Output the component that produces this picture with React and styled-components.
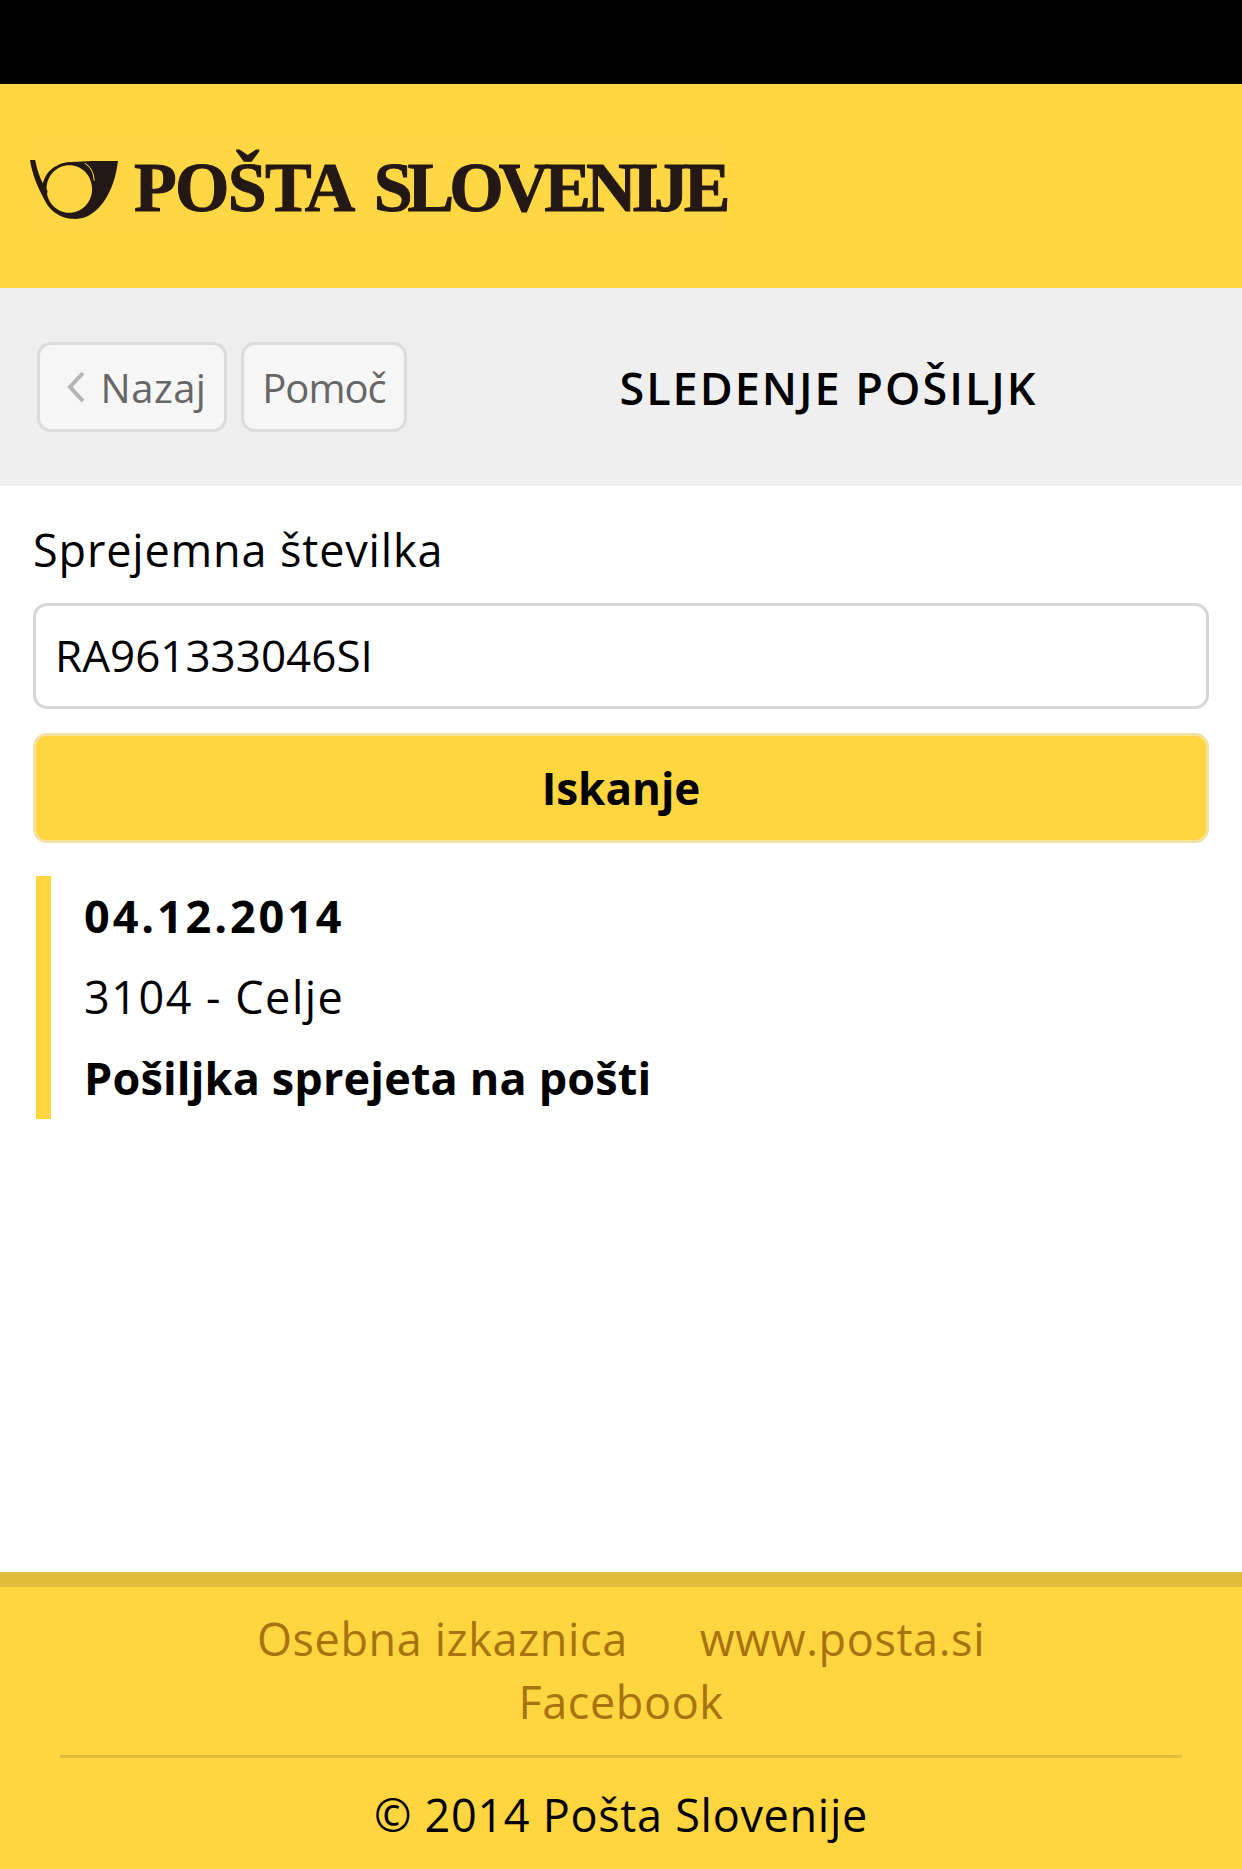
import React from 'react';
import styled, { createGlobalStyle } from 'styled-components';

const Global = createGlobalStyle`
  html, body { margin: 0; padding: 0; background: #fff; }
  body { font-family: "Open Sans", "Lato", "Liberation Sans", sans-serif; }
`;

const Page = styled.div`
  width: 1242px;
  height: 1869px;
  display: flex;
  flex-direction: column;
  overflow: hidden;
`;

const StatusBar = styled.div`
  height: 84px;
  background: #000;
`;

const Header = styled.header`
  height: 204px;
  background: #ffd540;
  display: flex;
  align-items: center;
  padding-left: 30px;
`;

const Logo = styled.div`
  display: flex;
  align-items: center;
  gap: 15px;
  height: 90px;
  background: #ffd643;
`;

const HornIcon = styled.svg`
  margin-top: 8px;
  flex: none;
`;

const LogoText = styled.div`
  display: flex;
  gap: 20px;
  margin-top: 3px;
  font-family: "Liberation Serif", serif;
  font-weight: 700;
  font-size: 70px;
  color: #231815;
  white-space: nowrap;
  -webkit-text-stroke: 1px #231815;
`;

const LogoWord = styled.span`
  letter-spacing: ${p => p.$spacing}px;
`;

const Toolbar = styled.div`
  height: 198px;
  background: #efefef;
  display: flex;
  align-items: center;
  padding-left: 37px;
`;

const BackButton = styled.a`
  box-sizing: border-box;
  height: 90px;
  width: ${p => p.$w}px;
  margin-right: 14px;
  padding-left: ${p => p.$pad || 0}px;
  display: flex;
  align-items: center;
  justify-content: center;
  gap: 15px;
  background: #f6f6f6;
  border: 3px solid #dcdcdc;
  border-radius: 14px;
  color: #666;
  font-size: 40px;
  letter-spacing: ${p => p.$spacing || 0}px;
`;

const Title = styled.h1`
  margin: 0;
  flex: 1;
  padding-right: 6px;
  text-align: center;
  font-size: 45px;
  font-weight: 600;
  letter-spacing: 2px;
  color: #000;
`;

const Main = styled.main`
  flex: 1;
  padding: 32px 33px 0;
`;

const Label = styled.label`
  display: block;
  font-size: 45px;
  letter-spacing: 0.85px;
  line-height: 64px;
  color: #000;
  margin-bottom: 21px;
`;

const Input = styled.input`
  box-sizing: border-box;
  display: block;
  width: 1176px;
  height: 106px;
  padding: 0 19px 2px;
  border: 3px solid #d6d6d6;
  border-radius: 14px;
  background: #fff;
  font: inherit;
  font-size: 44px;
  color: #000;
  outline: none;
`;

const SearchButton = styled.button`
  box-sizing: border-box;
  display: block;
  width: 1176px;
  height: 110px;
  margin-top: 24px;
  padding: 0;
  border: 3px solid #f5e2a0;
  border-radius: 14px;
  background: #ffd540;
  font: inherit;
  font-size: 44px;
  font-weight: 700;
  color: #000;
`;

const Entry = styled.section`
  box-sizing: border-box;
  margin: 33px 0 0 3px;
  height: 243px;
  border-left: 15px solid #ffd540;
  padding: 0 0 2px 33px;
  display: flex;
  flex-direction: column;
  justify-content: center;
`;

const EntryLine = styled.div`
  font-size: 45px;
  line-height: 81px;
  font-weight: ${p => (p.$bold ? 700 : 400)};
  letter-spacing: ${p => p.$spacing || 0}px;
  color: #000;
`;

const Footer = styled.footer`
  height: 297px;
  box-sizing: border-box;
  background: #ffd540;
  border-top: 15px solid #dfbc3a;
  text-align: center;
  padding-top: 20px;
`;

const FooterLinks = styled.div`
  display: flex;
  flex-wrap: wrap;
  justify-content: center;
  column-gap: 72px;
  margin: 0 auto;
  width: 800px;
`;

const FooterLink = styled.a`
  font-size: 45px;
  letter-spacing: 0.6px;
  line-height: 63px;
  color: #a8730f;
`;

const Divider = styled.hr`
  margin: 22px 60px 0;
  border: 0;
  height: 3px;
  background: #dfbc3a;
`;

const Copyright = styled.div`
  margin-top: 25px;
  font-size: 45px;
  letter-spacing: 0.7px;
  line-height: 64px;
  color: #000;
`;

const Horn = () => (
  <HornIcon width="89" height="60" viewBox="0 0 86 58" aria-hidden="true">
    <path
      fill="#231815"
      fillRule="evenodd"
      d="M85 1 C82 30 66 57 44 57 C26 57 12 44 12 28 C12 12 26 2 40 2 C48 2 54 1 60 1 Z M38 5 C26 5 16 15 16 28 C16 41 26 51 38 51 C50 51 60 41 60 28 C60 15 50 5 38 5 Z"
    />
    <path fill="#231815" d="M0 0 L5 0 C7 10 10 20 17 30 L15 40 C8 28 2 14 0 0 Z" />
    <path fill="none" stroke="#ffd540" strokeWidth="1" d="M53 3 C59 7 62 13 62 20" />
  </HornIcon>
);

const Chevron = () => (
  <svg width="20" height="34" viewBox="0 0 20 34" aria-hidden="true">
    <path d="M17 3 L4 17 L17 31" fill="none" stroke="#b4b4b4" strokeWidth="4" />
  </svg>
);

export default function App() {
  return (
    <Page>
      <Global />
      <StatusBar />
      <Header>
        <Logo>
          <Horn />
          <LogoText>
            <LogoWord $spacing={-1.7}>POŠTA</LogoWord>
            <LogoWord $spacing={-5}>SLOVENIJE</LogoWord>
          </LogoText>
        </Logo>
      </Header>
      <Toolbar>
        <BackButton $w={190} $spacing={0.5} $pad={8}><Chevron />Nazaj</BackButton>
        <BackButton $w={166} $spacing={-1}>Pomoč</BackButton>
        <Title>SLEDENJE POŠILJK</Title>
      </Toolbar>
      <Main>
        <Label>Sprejemna številka</Label>
        <Input defaultValue="RA961333046SI" />
        <SearchButton>Iskanje</SearchButton>
        <Entry>
          <EntryLine $bold $spacing={2.9}>04.12.2014</EntryLine>
          <EntryLine $spacing={1.5}>3104 - Celje</EntryLine>
          <EntryLine $bold $spacing={0.15}>Pošiljka sprejeta na pošti</EntryLine>
        </Entry>
      </Main>
      <Footer>
        <FooterLinks>
          <FooterLink>Osebna izkaznica</FooterLink>
          <FooterLink>www.posta.si</FooterLink>
          <FooterLink>Facebook</FooterLink>
        </FooterLinks>
        <Divider />
        <Copyright>© 2014 Pošta Slovenije</Copyright>
      </Footer>
    </Page>
  );
}
